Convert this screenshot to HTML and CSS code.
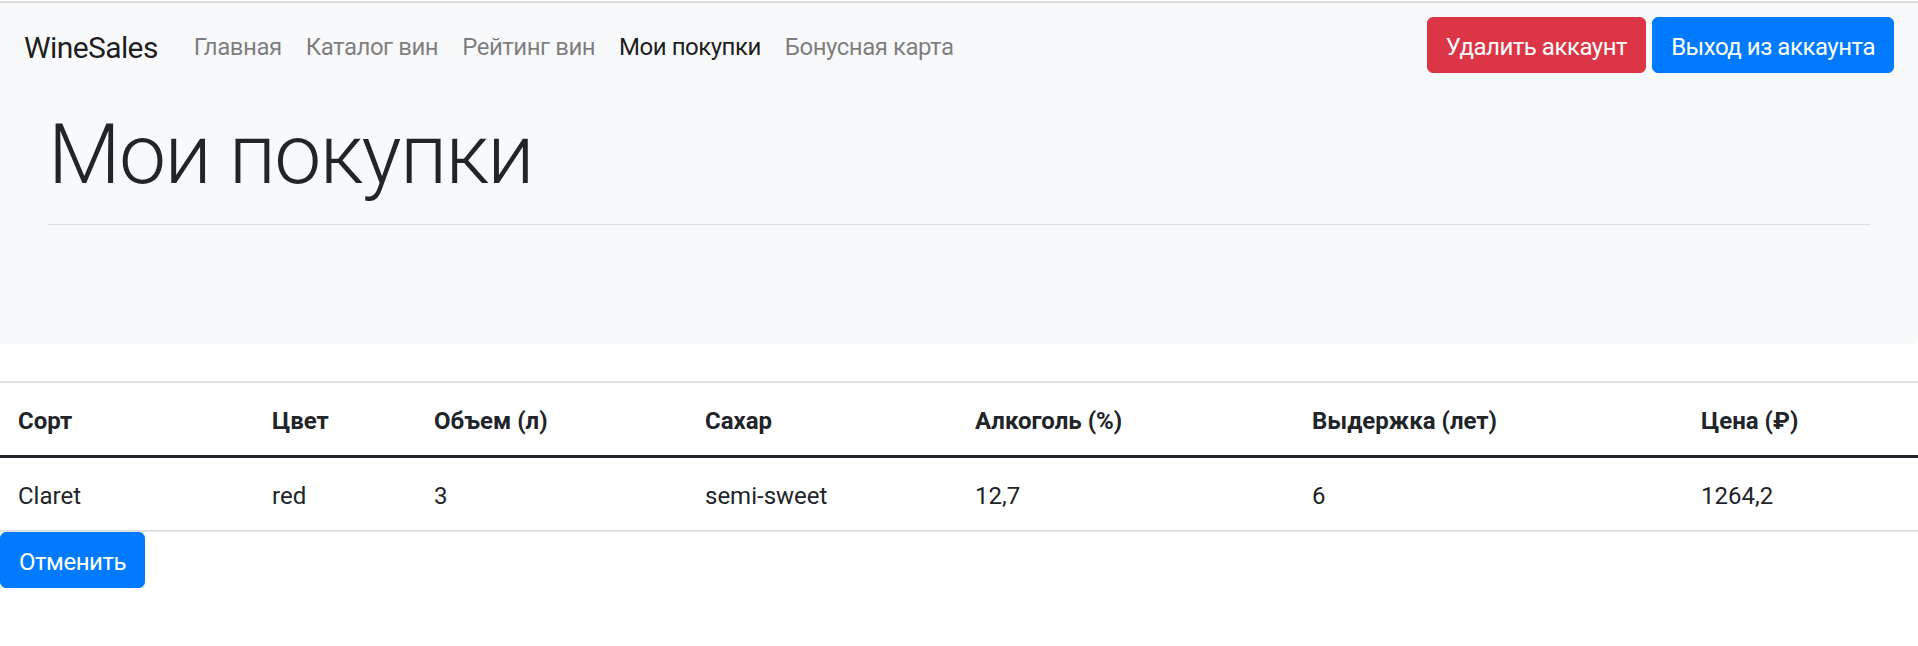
FILE: index.html
```html
<!DOCTYPE html>
<html lang="ru">
<head>
<meta charset="utf-8">
<title>WineSales — Мои покупки</title>
<link rel="stylesheet" href="styles.css">
</head>
<body>
<div class="topline"></div>
<header class="hero">
  <nav class="navbar">
    <a class="brand" href="#">WineSales</a>
    <ul class="nav">
      <li><a class="nav-link" href="#">Главная</a></li>
      <li><a class="nav-link" href="#">Каталог вин</a></li>
      <li><a class="nav-link" href="#">Рейтинг вин</a></li>
      <li><a class="nav-link active" href="#">Мои покупки</a></li>
      <li><a class="nav-link" href="#">Бонусная карта</a></li>
    </ul>
    <div class="actions">
      <button class="btn btn-danger" type="button">Удалить аккаунт</button>
      <button class="btn btn-primary" type="button">Выход из аккаунта</button>
    </div>
  </nav>
  <div class="jumbo">
    <h1 class="display">Мои покупки</h1>
    <hr class="divider">
  </div>
</header>
<main class="content">
  <table class="table">
    <colgroup>
      <col class="c1"><col class="c2"><col class="c3"><col class="c4"><col class="c5"><col class="c6"><col class="c7">
    </colgroup>
    <thead>
      <tr>
        <th>Сорт</th>
        <th>Цвет</th>
        <th>Объем (л)</th>
        <th>Сахар</th>
        <th>Алкоголь (%)</th>
        <th>Выдержка (лет)</th>
        <th>Цена (₽)</th>
      </tr>
    </thead>
    <tbody>
      <tr>
        <td>Claret</td>
        <td>red</td>
        <td>3</td>
        <td>semi-sweet</td>
        <td>12,7</td>
        <td>6</td>
        <td>1264,2</td>
      </tr>
    </tbody>
  </table>
  <button class="btn btn-primary" type="button">Отменить</button>
</main>
</body>
</html>
```

FILE: styles.css
```css
* {
  box-sizing: border-box;
}

html, body {
  margin: 0;
  padding: 0;
  background: #ffffff;
}

body {
  font-family: Roboto, "Noto Sans", "Liberation Sans", sans-serif;
  font-size: 24px;
  line-height: 36px;
  color: #212529;
}

.topline {
  margin-top: 1px;
  height: 2px;
  background: #dcdcdc;
}

.hero {
  background: #f8f9fa;
  border-bottom-right-radius: 7px;
  padding-bottom: 119px;
}

.navbar {
  display: flex;
  align-items: center;
  padding: 12px 24px;
}

.brand {
  font-size: 30px;
  line-height: 45px;
  padding: 9.5px 0 5.5px;
  margin-right: 24px;
  letter-spacing: -0.02em;
  color: rgba(0, 0, 0, 0.9);
  text-decoration: none;
}

.nav {
  display: flex;
  list-style: none;
  margin: 0;
  padding: 0;
}

.nav-link {
  display: block;
  padding: 14px 12px 10px;
  letter-spacing: -0.02em;
  color: rgba(0, 0, 0, 0.5);
  text-decoration: none;
}

.nav-link.active {
  color: rgba(0, 0, 0, 0.9);
}

.actions {
  margin-left: auto;
  display: flex;
  gap: 6px;
}

.btn {
  font-family: inherit;
  font-size: 24px;
  line-height: 36px;
  letter-spacing: -0.02em;
  padding: 11px 18px 7px;
  border: 1px solid transparent;
  border-radius: 6px;
  color: #ffffff;
  cursor: pointer;
}

.btn-danger {
  background: #dc3545;
  border-color: #dc3545;
}

.btn-primary {
  background: #007bff;
  border-color: #007bff;
}

.jumbo {
  padding: 18px 48px 0;
}

.display {
  margin: 0;
  font-size: 84px;
  line-height: 100.8px;
  font-weight: 300;
  letter-spacing: -0.02em;
  color: #212529;
}

.divider {
  margin: 18px 0 0;
  border: 0;
  border-top: 1px solid #dcdee0;
  height: 0;
}

.content {
  margin-top: 37px;
}

.table {
  width: 100%;
  table-layout: fixed;
  border-collapse: separate;
  border-spacing: 0;
}

.c1 { width: 254px; }
.c2 { width: 162px; }
.c3 { width: 271px; }
.c4 { width: 270px; }
.c5 { width: 337px; }
.c6 { width: 389px; }
.c7 { width: 235px; }

.table th,
.table td {
  padding: 20px 18px 16px;
  text-align: left;
  vertical-align: top;
  line-height: 36px;
}

.table th {
  font-weight: 700;
  border-top: 2px solid #dee2e6;
  border-bottom: 3px solid #212529;
}

.table td {
  border-bottom: 2px solid #dee2e6;
}
```
